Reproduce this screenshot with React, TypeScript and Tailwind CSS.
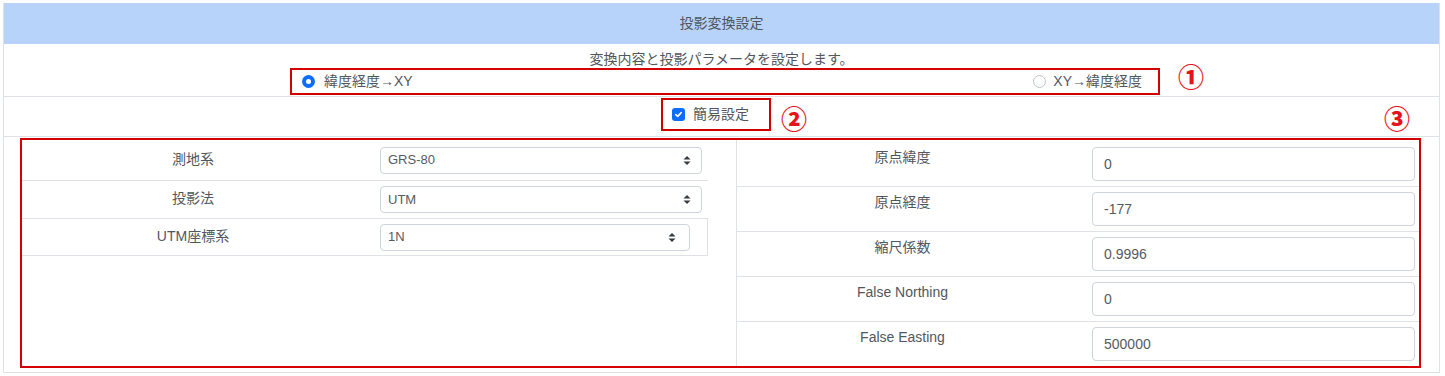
import React from 'react'

const fieldFont = "font-['Liberation_Sans','Noto_Sans_CJK_JP',sans-serif]"

function Chevrons() {
  return (
    <svg width="8" height="11" viewBox="0 0 8 11" className="shrink-0">
      <path d="M4 1 L7.5 4.5 H0.5 Z" fill="#343a40" />
      <path d="M4 10 L7.5 6.5 H0.5 Z" fill="#343a40" />
    </svg>
  )
}

function Select({ value, narrow }: { value: string; narrow?: boolean }) {
  return (
    <div className={`flex h-[27px] w-full items-center justify-between rounded-[4px] border border-[#ced4da] bg-white pl-[7px] text-[13px] text-[#555b61] ${narrow ? 'pr-[13px]' : 'pr-[10px]'}`}>
      <span>{value}</span>
      <Chevrons />
    </div>
  )
}

function Circled({ n, className }: { n: string; className: string }) {
  return (
    <div className={`absolute flex h-[28px] w-[28px] items-center justify-center text-[26px] font-black leading-none text-[#e5141b] font-['Noto_Sans_CJK_JP',sans-serif] ${className}`}>
      {n}
    </div>
  )
}

const leftRows = [
  { label: '測地系', value: 'GRS-80' },
  { label: '投影法', value: 'UTM' },
  { label: 'UTM座標系', value: '1N' },
]

const rightRows = [
  { label: '原点緯度', value: '0' },
  { label: '原点経度', value: '-177' },
  { label: '縮尺係数', value: '0.9996' },
  { label: 'False Northing', value: '0' },
  { label: 'False Easting', value: '500000' },
]

export default function App() {
  return (
    <div className={`h-[376px] w-[1445px] bg-white pl-[3px] pt-[3px] text-[14px] text-[#51575d] ${fieldFont}`}>
      <div className="relative w-[1437px] border-x border-b border-[#dee2e6]">
        <div className="flex h-[41px] items-center justify-center bg-[#b8d3fa] text-[#4f5660]">投影変換設定</div>

        <div className="flex h-[53px] flex-col items-center border-b border-[#dee2e6] pt-[7px]">
          <p className="leading-[17px]">変換内容と投影パラメータを設定します。</p>
          <div className="ml-[7px] flex h-[27px] w-[870px] items-center justify-between border-2 border-[#d40000] pl-[10px] pr-[16px]">
            <label className="flex items-center gap-[9px]">
              <span className="flex h-[13px] w-[13px] items-center justify-center rounded-full bg-[#0d6efd]">
                <span className="h-[5px] w-[5px] rounded-full bg-white" />
              </span>
              <span>緯度経度→XY</span>
            </label>
            <label className="flex items-center gap-[7px]">
              <span className="h-[13px] w-[13px] rounded-full border border-[#bfc4c9] bg-white" />
              <span>XY→緯度経度</span>
            </label>
          </div>
        </div>

        <div className="flex h-[40px] justify-center border-b border-[#dee2e6] pr-[11px] pt-[1px]">
          <div className="flex h-[33px] w-[110px] items-center gap-[8px] border-2 border-[#d40000] pl-[9px]">
            <span className="flex h-[13px] w-[13px] items-center justify-center rounded-[3px] bg-[#0d6efd]">
              <svg width="9" height="9" viewBox="0 0 9 9">
                <path d="M1.8 4.6 L3.7 6.4 L7.2 2.6" fill="none" stroke="white" strokeWidth="1.6" strokeLinecap="round" strokeLinejoin="round" />
              </svg>
            </span>
            <span>簡易設定</span>
          </div>
        </div>

        <div className="pb-[4px] pl-[16px] pt-[1px]">
          <div className="flex h-[230px] w-[1401px] gap-[28px] border-2 border-[#d40000]">
            <div className="w-[686px]">
              {leftRows.map((r, i) => (
                <div
                  key={r.label}
                  className={`flex items-center ${i === 0 ? 'h-[40px]' : 'h-[38px] border-t border-[#dee2e6]'} ${i === 2 ? 'border-b border-r' : ''} border-[#dee2e6]`}
                >
                  <div className="mb-[2px] w-[342px] text-center">{r.label}</div>
                  <div className={`flex-1 pl-[16px] ${i === 2 ? 'pr-[17px]' : 'pr-[6px]'}`}>
                    <Select value={r.value} narrow={i === 2} />
                  </div>
                </div>
              ))}
            </div>

            <div className="flex-1 border-l border-[#dee2e6]">
              {rightRows.map((r, i) => (
                <div
                  key={r.label}
                  className={`flex items-start ${i === 0 ? 'h-[46px] pt-[7px]' : 'h-[45px] border-t border-[#dee2e6] pt-[5px]'}`}
                >
                  <div className="w-[331px] text-center leading-[21px]">{r.label}</div>
                  <div className="flex-1 pl-[24px] pr-[4px]">
                    <div className="flex h-[34px] items-center rounded-[4px] border border-[#ced4da] bg-white pl-[11px] text-[14px] text-[#555b61]">
                      {r.value}
                    </div>
                  </div>
                </div>
              ))}
            </div>
          </div>
        </div>

        <Circled n="①" className="left-[1173px] top-[59px]" />
        <Circled n="②" className="left-[776px] top-[101px]" />
        <Circled n="③" className="left-[1379px] top-[101px]" />
      </div>
    </div>
  )
}
